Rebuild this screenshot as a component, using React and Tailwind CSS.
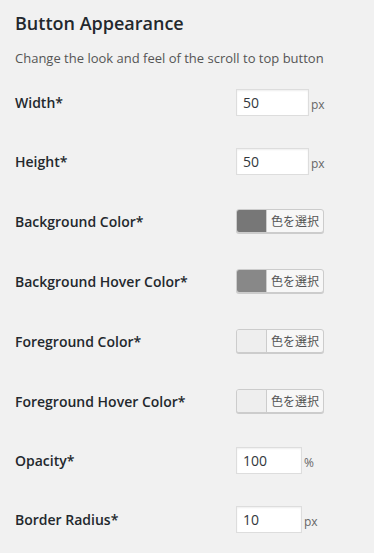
import React from "react";

const font = { fontFamily: '"Open Sans", "Noto Sans CJK JP", sans-serif' };

function InputRow({ label, value, unit, w }) {
  return (
    <div className="flex h-[59px] items-center">
      <div className="w-[221px] text-[14px] font-semibold text-[#23282d]">{label}</div>
      <div className="flex items-center">
        <div className={`${w} h-[27px] border border-[#dddddd] bg-white px-[6px] text-[14px] leading-[25px] text-[#32373c] shadow-[inset_0_1px_2px_rgba(0,0,0,0.07)]`}>
          {value}
        </div>
        <span className="ml-[2px] mt-[4px] text-[12px] text-[#666]">{unit}</span>
      </div>
    </div>
  );
}

function ColorRow({ label, swatch }) {
  return (
    <div className="flex h-[60px] items-center">
      <div className="w-[221px] text-[14px] font-semibold text-[#23282d]">{label}</div>
      <div className="flex h-[24px] w-[88px] overflow-hidden rounded-[3px] border border-[#cccccc] bg-[#f7f7f7] shadow-[0_1px_0_#cccccc]">
        <div className={`w-[30px] border-r border-[#cccccc] ${swatch}`} />
        <div
          className="flex flex-1 items-center justify-center text-[12px] text-[#555]"
          style={{ fontFamily: '"Noto Sans CJK JP", sans-serif' }}
        >
          色を選択
        </div>
      </div>
    </div>
  );
}

export default function App() {
  return (
    <div className="min-h-[553px] w-[374px] bg-[#f1f1f1] pl-[15px]" style={font}>
      <h2 className="pt-[11px] text-[18px] font-semibold leading-[24px] text-[#23282d]">
        Button Appearance
      </h2>
      <p className="mt-[13px] text-[13px] leading-[20px] text-[#555]">
        Change the look and feel of the scroll to top button
      </p>
      <div className="mt-[5px]">
        <InputRow label="Width*" value="50" unit="px" w="w-[73px]" />
        <InputRow label="Height*" value="50" unit="px" w="w-[73px]" />
        <ColorRow label="Background Color*" swatch="bg-[#777777]" />
        <ColorRow label="Background Hover Color*" swatch="bg-[#888888]" />
        <ColorRow label="Foreground Color*" swatch="bg-[#eeeeee]" />
        <ColorRow label="Foreground Hover Color*" swatch="bg-[#eeeeee]" />
        <InputRow label="Opacity*" value="100" unit="%" w="w-[66px]" />
        <InputRow label="Border Radius*" value="10" unit="px" w="w-[66px]" />
      </div>
    </div>
  );
}
